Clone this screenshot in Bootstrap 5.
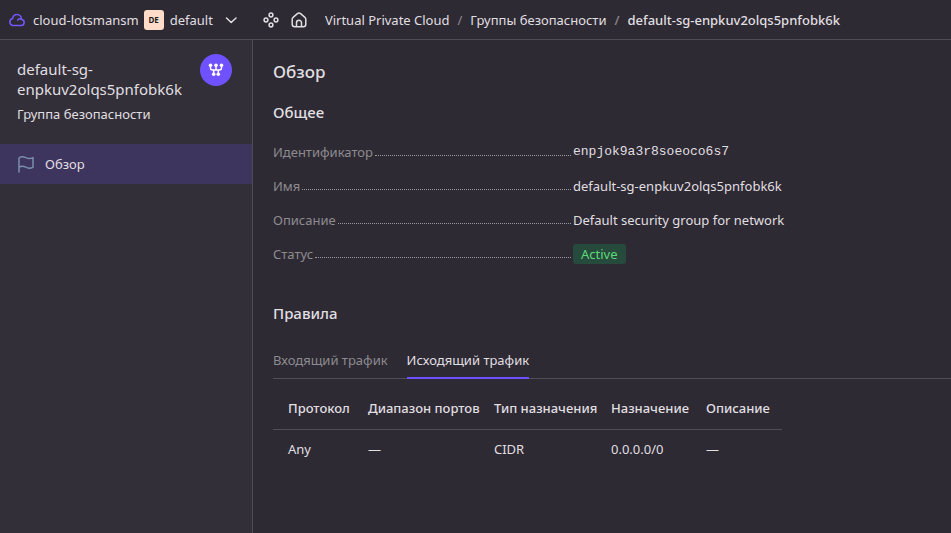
<!DOCTYPE html>
<html lang="ru" data-bs-theme="dark">
<head>
<meta charset="utf-8">
<meta name="viewport" content="width=device-width, initial-scale=1">
<title>default-sg-enpkuv2olqs5pnfobk6k — Группа безопасности</title>
<link href="https://cdn.jsdelivr.net/npm/bootstrap@5.3.0/dist/css/bootstrap.min.css" rel="stylesheet">
<style>
  :root { --line: #504d54; --ink: #e0dfe1; --muted: #8d8b90; --accent: #6f51ff; }
  body { background: #2d2a33; color: var(--ink); font: 13px/20px "Noto Sans", "Open Sans", sans-serif; }
  a { color: inherit; text-decoration: none; }
  svg { display: block; flex: none; fill: none; stroke: currentColor; stroke-width: 1.5; stroke-linecap: round; stroke-linejoin: round; }
  .topbar { height: 40px; border-bottom: 1px solid var(--line); padding-left: 8px; }
  .plain-btn { border: 0; background: none; color: inherit; padding: 0; }
  .folder-mark { width: 20px; height: 20px; border-radius: 3px; background: #ffdbc9; color: #1d1a20; font-size: 8px; font-weight: 700; margin-left: 5px; margin-right: 6px; }
  .cloud-icon { color: #7458ff; margin-right: 8px; }
  .chevron { margin-left: 10px; margin-right: 24px; }
  .crumbs { --bs-breadcrumb-divider: "/"; --bs-breadcrumb-divider-color: #8d8b90; --bs-breadcrumb-item-padding-x: 8px; --bs-breadcrumb-font-size: 13px; margin-left: 18px; }
  .crumbs .active { color: var(--ink); font-weight: 500; }
  .side { flex: 0 0 253px; background: #322f38; border-right: 1px solid var(--line); }
  .side-head { padding: 14px 20px 20px 17px; }
  .side-name { font-size: 15px; line-height: 20px; padding-top: 5px; overflow-wrap: anywhere; }
  .side-kind { margin-top: 5px; }
  .group-icon { flex: none; width: 32px; height: 32px; background: #6f51ff; color: #fff; }
  .side-link { height: 40px; padding-left: 17px; gap: 10px; background: #3e355f; }
  .side-link svg { color: #7a8fab; }
  .pane { padding: 20px 0 20px 20px; }
  .pane h1, .pane h2 { font-weight: 500; margin: 0; color: var(--ink); }
  .pane h1 { font-size: 17px; line-height: 24px; }
  .pane h2 { font-size: 15px; line-height: 20px; }
  .pane h1 + h2 { margin-top: 18px; }
  .facts { display: grid; gap: 14px; margin: 20px 0 39px; }
  .facts dt { flex: 0 0 300px; font-weight: 400; color: var(--muted); }
  .facts dt::after { content: ""; flex: 1; border-bottom: 1px dotted #9b999e; margin: 0 2px 6px; }
  .fact-id { font-family: "Liberation Mono", monospace; }
  .status { background: #264a3c; color: #5fd67b; border-radius: 3px; padding: 0 8px; }
  .traffic { --bs-nav-tabs-border-width: 0; border-bottom: 1px solid var(--line); gap: 19px; margin-top: 27px; }
  .traffic .nav-link { padding: 0 0 7px; line-height: 20px; color: var(--muted); border: 0; border-bottom: 2px solid transparent; border-radius: 0; margin-bottom: -1px; background: none; }
  .traffic .nav-link.active { color: var(--ink); background: none; border-color: var(--accent); }
  .rules { width: 509px; table-layout: fixed; margin: 10px 0 0; --bs-table-bg: transparent; --bs-table-color: var(--ink); --bs-border-color: var(--line); }
  .rules th, .rules td { padding: 9px 0 11px 10px; white-space: nowrap; border: 0; }
  .rules th:first-child, .rules td:first-child { padding-left: 15px; }
  .rules th { font-weight: 500; border-bottom: 1px solid var(--line); }
  .col-proto { width: 85px; }
  .col-ports { width: 126px; }
  .col-kind { width: 117px; }
  .col-dest { width: 95px; }
</style>
<script defer src="https://cdn.jsdelivr.net/npm/bootstrap@5.3.0/dist/js/bootstrap.bundle.min.js"></script>
</head>
<body class="d-flex flex-column min-vh-100">
<header class="topbar d-flex align-items-center">
  <a href="#" class="d-flex align-items-center"><svg class="cloud-icon" width="17" height="16" viewBox="0 0 17 16"><path d="M4.500 13.500h8.200a3 3 0 0 0 .8-6C13.500 4.500 11.500 2.500 9 2.500S5 4.200 4.700 6.500a3.600 3.600 0 0 0-.2 7zM9.700 8.200c.6-1.200 2-1.700 3.500-1"/></svg>cloud-lotsmansm</a>
  <button type="button" class="plain-btn d-flex align-items-center"><span class="folder-mark d-flex align-items-center justify-content-center">DE</span>default<svg class="chevron" width="16" height="16" viewBox="0 0 16 16"><path d="M3.500 6l4.700 4.500L13 6"/></svg></button>
  <button type="button" class="plain-btn" aria-label="Все сервисы"><svg width="16" height="16" viewBox="0 0 16 16"><circle cx="8" cy="3" r="1.900"/><circle cx="3" cy="8" r="1.900"/><circle cx="13" cy="8" r="1.900"/><circle cx="8" cy="13" r="1.900"/></svg></button>
  <a href="#" aria-label="Главная" class="ms-2 ps-1"><svg width="16" height="16" viewBox="0 0 16 16"><path d="M1.200 7.300v5a2.500 2.500 0 0 0 2.500 2.500h8.600a2.500 2.500 0 0 0 2.500-2.500v-5c0-.8-.3-1.500-.9-2L9.600 1.700a2.500 2.500 0 0 0-3.200 0L2.100 5.300c-.6.500-.9 1.200-.9 2zM5.500 14.700v-4a2.500 2.500 0 0 1 5 0v4"/></svg></a>
  <nav aria-label="Навигация"><ol class="breadcrumb crumbs mb-0 flex-nowrap text-nowrap">
    <li class="breadcrumb-item"><a href="#">Virtual Private Cloud</a></li>
    <li class="breadcrumb-item"><a href="#">Группы безопасности</a></li>
    <li class="breadcrumb-item active" aria-current="page">default-sg-enpkuv2olqs5pnfobk6k</li>
  </ol></nav>
</header>
<div class="d-flex flex-grow-1">
  <aside class="side">
    <div class="side-head d-flex align-items-start justify-content-between">
      <div><div class="side-name">default-sg-<wbr>enpkuv2olqs5pnfobk6k</div><div class="side-kind">Группа безопасности</div></div>
      <span class="group-icon rounded-circle d-flex align-items-center justify-content-center"><svg width="16" height="16" viewBox="0 0 16 16"><path d="M2.500 3v3a2 2 0 0 0 2 2h7a2 2 0 0 0 2-2V3M8 3v5M5.700 8v4M10.300 8v4"/><g fill="currentColor" stroke="none"><circle cx="2.500" cy="3.300" r="1.800"/><circle cx="8" cy="3.300" r="1.800"/><circle cx="13.500" cy="3.300" r="1.800"/><circle cx="5.700" cy="12.300" r="1.800"/><circle cx="10.300" cy="12.300" r="1.800"/></g></svg></span>
    </div>
    <nav><a href="#" class="side-link d-flex align-items-center" aria-current="page"><svg width="18" height="18" viewBox="0 0 18 18"><path d="M2 17V3.500C2 2.500 3.500 1.700 5.500 1.700c2.500 0 4 1.800 6.500 1.800 1.700 0 2.800-.4 4-.9v9.700c-1 .5-2.200.9-4 .9-2.500 0-4-2-6.500-2-1.500 0-2.700.4-3.500 1"/></svg>Обзор</a></nav>
  </aside>
  <main class="pane flex-grow-1">
    <h1>Обзор</h1>
    <h2>Общее</h2>
    <dl class="facts">
      <div class="d-flex"><dt class="d-flex">Идентификатор</dt><dd class="fact-id mb-0">enpjok9a3r8soeoco6s7</dd></div>
      <div class="d-flex"><dt class="d-flex">Имя</dt><dd class="mb-0">default-sg-enpkuv2olqs5pnfobk6k</dd></div>
      <div class="d-flex"><dt class="d-flex">Описание</dt><dd class="mb-0">Default security group for network</dd></div>
      <div class="d-flex"><dt class="d-flex">Статус</dt><dd class="status mb-0">Active</dd></div>
    </dl>
    <h2>Правила</h2>
    <div class="nav nav-tabs traffic" role="tablist">
      <button type="button" class="nav-link" role="tab" aria-selected="false">Входящий трафик</button>
      <button type="button" class="nav-link active" role="tab" aria-selected="true">Исходящий трафик</button>
    </div>
    <table class="table rules">
      <colgroup><col class="col-proto"><col class="col-ports"><col class="col-kind"><col class="col-dest"><col></colgroup>
      <thead><tr><th scope="col">Протокол</th><th scope="col">Диапазон портов</th><th scope="col">Тип назначения</th><th scope="col">Назначение</th><th scope="col">Описание</th></tr></thead>
      <tbody><tr><td>Any</td><td>—</td><td>CIDR</td><td>0.0.0.0/0</td><td>—</td></tr></tbody>
    </table>
  </main>
</div>
</body>
</html>
